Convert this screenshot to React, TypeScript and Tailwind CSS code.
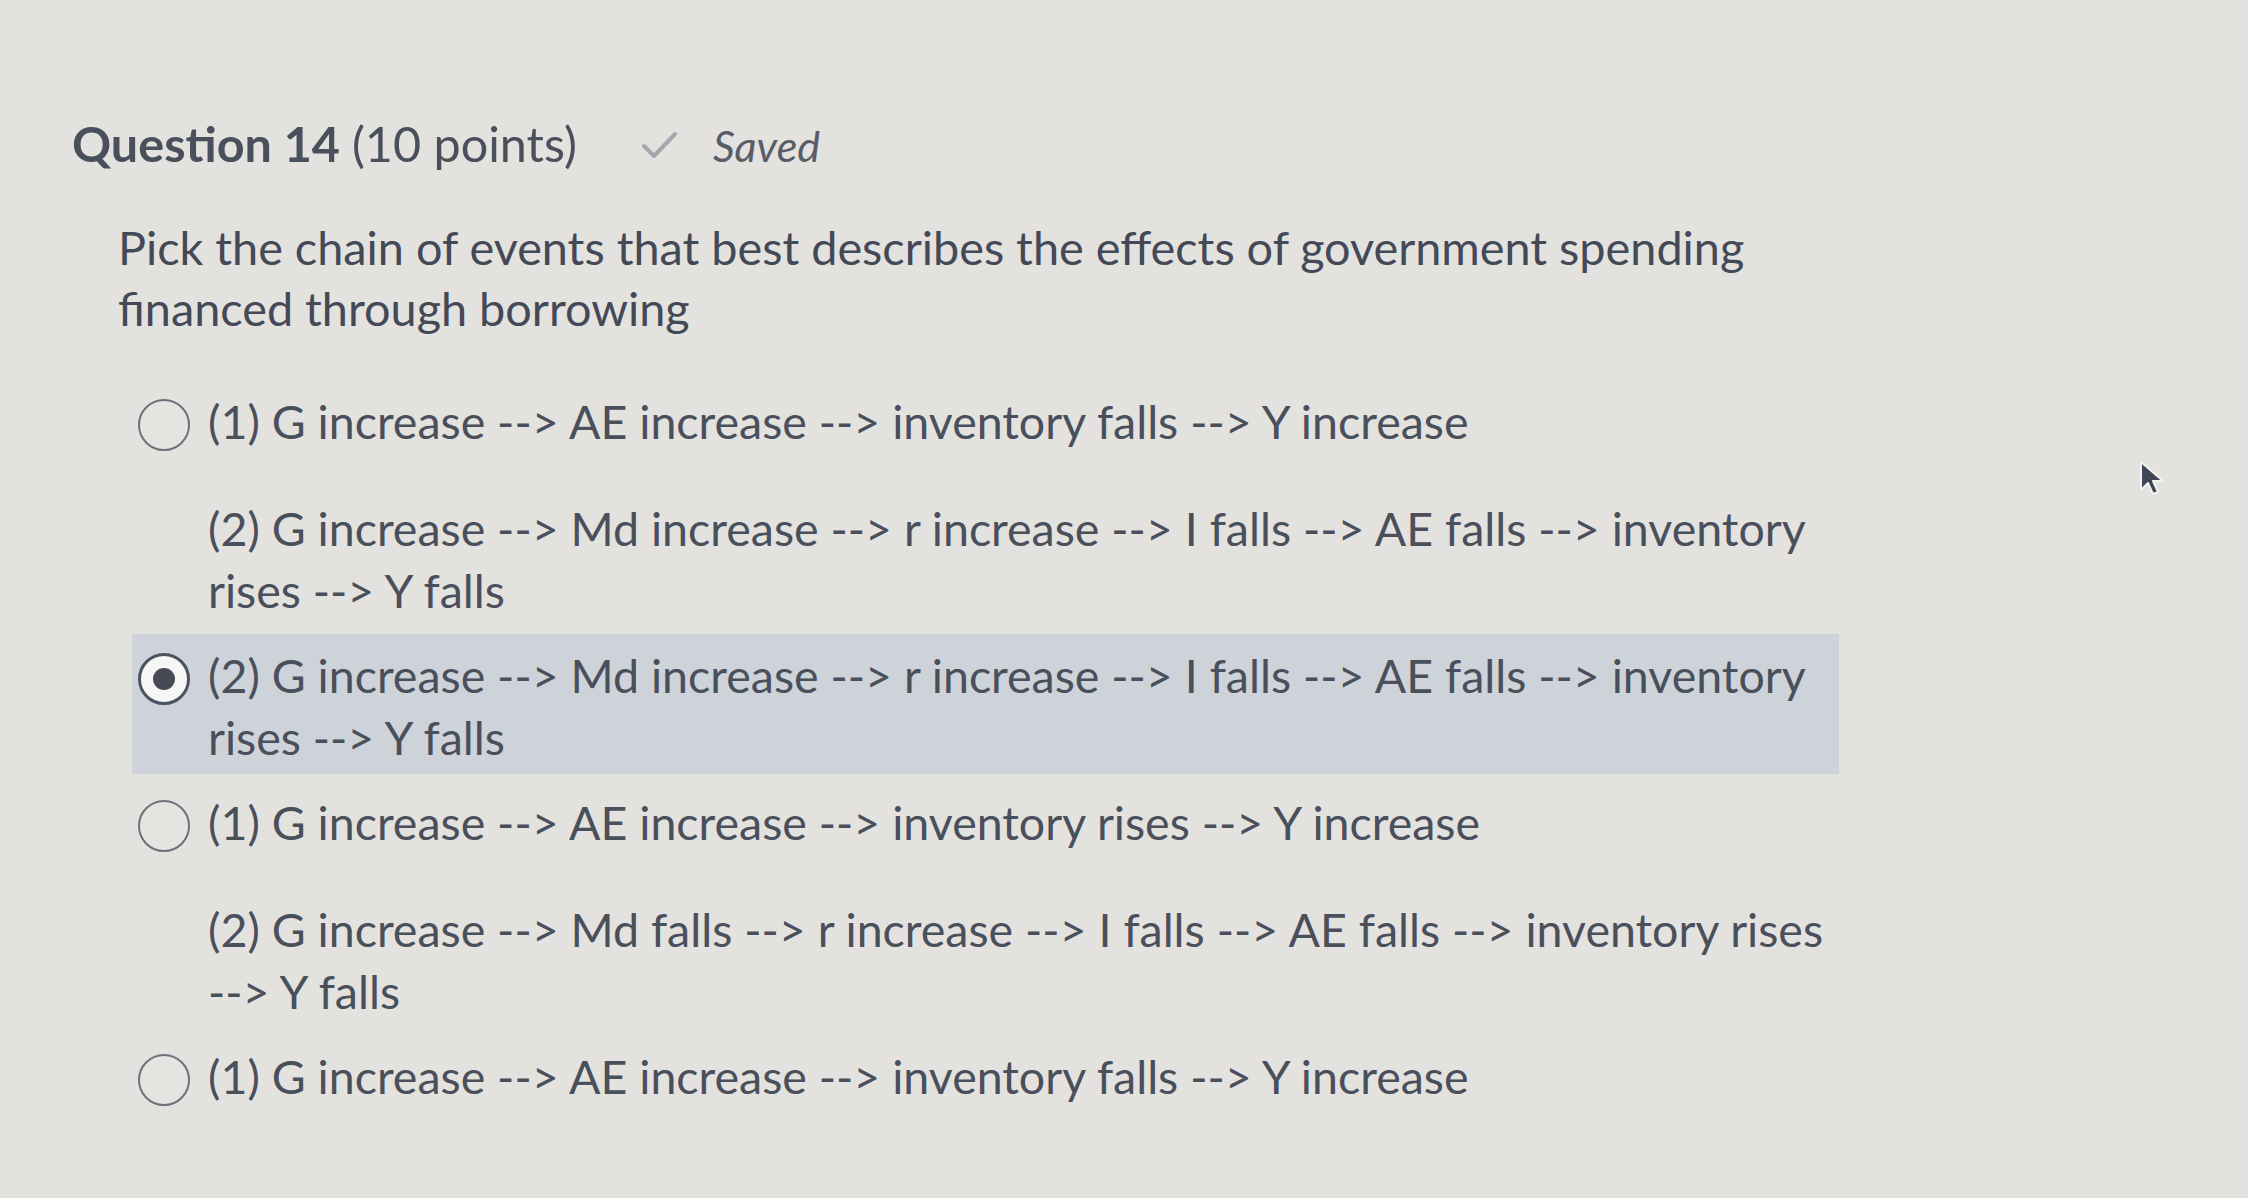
import React from "react";

type Option = {
  id: number;
  paragraphs: string[];
  selected?: boolean;
};

const options: Option[] = [
  {
    id: 1,
    paragraphs: [
      "(1) G increase --> AE increase --> inventory falls --> Y increase",
      "(2) G increase --> Md increase --> r increase --> I falls --> AE falls --> inventory rises --> Y falls",
    ],
  },
  {
    id: 2,
    selected: true,
    paragraphs: [
      "(2) G increase --> Md increase --> r increase --> I falls --> AE falls --> inventory rises --> Y falls",
    ],
  },
  {
    id: 3,
    paragraphs: [
      "(1) G increase --> AE increase --> inventory rises --> Y increase",
      "(2) G increase --> Md falls --> r increase --> I falls --> AE falls --> inventory rises --> Y falls",
    ],
  },
  {
    id: 4,
    paragraphs: [
      "(1) G increase --> AE increase --> inventory falls --> Y increase",
    ],
  },
];

function Radio({ checked }: { checked?: boolean }) {
  return (
    <div
      className={`mt-[9px] flex h-[52px] w-[52px] shrink-0 items-center justify-center rounded-full ${
        checked
          ? "border-[3px] border-[#4d5260] bg-[#f6f6f4]"
          : "border-[2.5px] border-[#6d717a] bg-[#e4e4e1]"
      }`}
    >
      {checked && <div className="h-[22px] w-[22px] rounded-full bg-[#454a56]" />}
    </div>
  );
}

export default function App() {
  return (
    <div
      className="relative h-[1198px] w-[2248px] overflow-hidden bg-[#e3e2de] text-[#4a4f5c]"
      style={{ fontFamily: "Lato, 'Noto Sans', sans-serif" }}
    >
      <div className="pl-[72px] pt-[112px]">
        <div className="flex items-baseline text-[48.5px] leading-[62px]">
          <span className="font-bold">Question 14</span>
          <span className="ml-[12px]">(10 points)</span>
          <svg
            className="ml-[64px] h-[32px] w-[38px] self-center"
            viewBox="0 0 38 30"
            fill="none"
          >
            <path
              d="M3 16 L13 26 L34 4"
              stroke="#a4a8ae"
              strokeWidth="4"
              strokeLinecap="round"
              strokeLinejoin="round"
            />
          </svg>
          <span className="ml-[34px] text-[43px] italic text-[#585d69]">Saved</span>
        </div>

        <p className="ml-[46px] mt-[40px] w-[1720px] text-[46.8px] leading-[61px] text-[#444957]">
          Pick the chain of events that best describes the effects of government spending
          financed through borrowing
        </p>

        <div className="ml-[60px] mt-[41px] flex w-[1707px] flex-col gap-[7px]">
          {options.map((o) => (
            <div
              key={o.id}
              className={`flex gap-[18px] pb-[6px] pl-[6px] pr-[11px] pt-[10px] ${
                o.selected ? "bg-[#cdd3d8]" : ""
              }`}
            >
              <Radio checked={o.selected} />
              <div className="flex flex-col gap-[45px] text-[46.5px] leading-[62px]">
                {o.paragraphs.map((p, i) => (
                  <p key={i}>{p}</p>
                ))}
              </div>
            </div>
          ))}
        </div>
      </div>

      <svg
        className="absolute left-[2138px] top-[460px] h-[40px] w-[28px]"
        viewBox="0 0 28 40"
      >
        <path
          d="M3 2 L3 30 L10 23 L15 34 L20 32 L15 21 L25 21 Z"
          fill="#3f4656"
          stroke="#f2f2f0"
          strokeWidth="2"
          strokeLinejoin="round"
        />
      </svg>
    </div>
  );
}
